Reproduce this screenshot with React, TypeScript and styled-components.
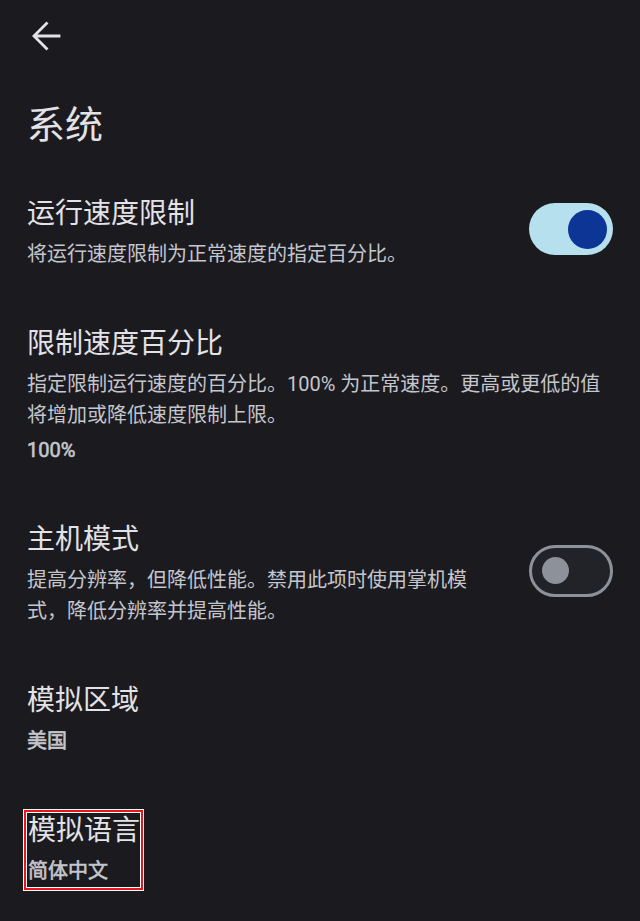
import styled, { createGlobalStyle } from 'styled-components';

const GlobalStyle = createGlobalStyle`
  html, body {
    margin: 0;
    padding: 0;
    background: #1b1b1f;
  }
  body {
    font-family: Roboto, "Noto Sans CJK SC", "Noto Sans", sans-serif;
    -webkit-font-smoothing: antialiased;
  }
`;

interface Setting {
  title: string;
  description?: string;
  value?: string;
  toggle?: boolean;
  highlighted?: boolean;
}

const settings: Setting[] = [
  {
    title: '运行速度限制',
    description: '将运行速度限制为正常速度的指定百分比。',
    toggle: true,
  },
  {
    title: '限制速度百分比',
    description:
      '指定限制运行速度的百分比。100% 为正常速度。更高或更低的值将增加或降低速度限制上限。',
    value: '100%',
  },
  {
    title: '主机模式',
    description:
      '提高分辨率，但降低性能。禁用此项时使用掌机模式，降低分辨率并提高性能。',
    toggle: false,
  },
  {
    title: '模拟区域',
    value: '美国',
  },
  {
    title: '模拟语言',
    value: '简体中文',
    highlighted: true,
  },
];

const BackIcon = () => (
  <svg width='40' height='40' viewBox='0 0 40 40' fill='none'>
    <path
      d='M33 20H8.5M20.5 7.5L8 20l12.5 12.5'
      stroke='#e3e2e6'
      strokeWidth='2.8'
      strokeLinecap='square'
    />
  </svg>
);

export default function App() {
  return (
    <Page>
      <GlobalStyle />
      <Toolbar>
        <BackButton aria-label='返回'>
          <BackIcon />
        </BackButton>
      </Toolbar>
      <PageTitle>系统</PageTitle>
      <List>
        {settings.map((s) => (
          <Item key={s.title}>
            <TextBlock $highlighted={s.highlighted}>
              <Title>{s.title}</Title>
              {s.description && <Description>{s.description}</Description>}
              {s.value && <Value>{s.value}</Value>}
            </TextBlock>
            {s.toggle !== undefined && (
              <Switch $on={s.toggle}>
                <Thumb $on={s.toggle} />
              </Switch>
            )}
          </Item>
        ))}
      </List>
    </Page>
  );
}

const Page = styled.div`
  width: 640px;
  min-height: 921px;
  background: #1b1b1f;
  color: #e3e2e6;
`;

const Toolbar = styled.div`
  height: 71px;
  display: flex;
  align-items: center;
  padding-left: 26px;
`;

const BackButton = styled.button`
  background: none;
  border: none;
  padding: 0;
  width: 40px;
  height: 40px;
  display: flex;
  cursor: pointer;
`;

const PageTitle = styled.h1`
  margin: 30px 0 19px;
  padding-left: 27px;
  font-size: 38px;
  line-height: 48px;
  font-weight: 400;
  color: #e3e2e6;
`;

const List = styled.div`
  display: flex;
  flex-direction: column;
`;

const Item = styled.div`
  display: flex;
  align-items: center;
  padding: 28px 27px;
`;

const TextBlock = styled.div<{ $highlighted?: boolean }>`
  flex: ${({ $highlighted }) => ($highlighted ? '0 0 auto' : '1')};
  min-width: 0;
  padding-left: ${({ $highlighted }) => ($highlighted ? '1px' : '0')};
  box-shadow: ${({ $highlighted }) =>
    $highlighted
      ? '0 0 0 1px #ffffff, 0 0 0 3px #e8151b, 0 0 0 4px #ffffff'
      : 'none'};
`;

const Title = styled.div`
  font-size: 28px;
  line-height: 36px;
  color: #e3e2e6;
`;

const Description = styled.div`
  margin-top: 7px;
  font-size: 20px;
  line-height: 31px;
  color: #c5c6cd;
`;

const Value = styled.div`
  margin-top: 4px;
  font-size: 20px;
  line-height: 31px;
  font-weight: 400;
  color: #c5c6cd;
  -webkit-text-stroke: 0.6px #c5c6cd;

  ${Title} + & {
    margin-top: 7px;
  }
`;

const Switch = styled.div<{ $on: boolean }>`
  flex-shrink: 0;
  margin: 0 0 8px 52px;
  width: 84px;
  height: 52px;
  box-sizing: border-box;
  border-radius: 26px;
  display: flex;
  align-items: center;
  justify-content: ${({ $on }) => ($on ? 'flex-end' : 'flex-start')};
  padding: ${({ $on }) => ($on ? '0 6px' : '0 10px')};
  background: ${({ $on }) => ($on ? '#b7e0ee' : '#222328')};
  border: ${({ $on }) => ($on ? '0' : '3px solid #8d9199')};
`;

const Thumb = styled.div<{ $on: boolean }>`
  width: ${({ $on }) => ($on ? '39px' : '27px')};
  height: ${({ $on }) => ($on ? '39px' : '27px')};
  border-radius: 50%;
  background: ${({ $on }) => ($on ? '#0c3596' : '#8d9199')};
`;
